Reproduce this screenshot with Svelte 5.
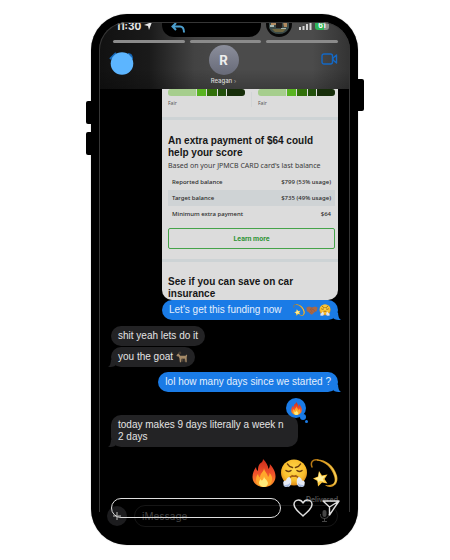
<script>
  let reply = $state("");
  let message = $state("");

  const rows = [
    { label: "Reported balance", value: "$799 (53% usage)" },
    { label: "Target balance", value: "$735 (49% usage)" },
    { label: "Minimum extra payment", value: "$64" },
  ];
</script>

{#snippet fire()}
  <svg class="emoji" viewBox="0 0 28 28" role="img" aria-label="fire">
    <defs>
      <linearGradient id="flame" x1="0" y1="0" x2="0" y2="1">
        <stop offset="0" stop-color="#c92b1b" />
        <stop offset="0.5" stop-color="#f0502a" />
        <stop offset="1" stop-color="#ff9a2a" />
      </linearGradient>
    </defs>
    <path fill="url(#flame)" d="M13 0c3 3 5 6 5.500 10 1-1 1.500-3 1.300-5 3 3 6 8 5.700 13-.3 6-5 10-11.500 10S2.500 24 2.500 18c0-4 1.500-7 3.500-10 .2 2 .7 3 2 4C8 7 9 5 11.500 3.500 12.500 2.500 13 1.500 13 0z" />
    <path fill="#ffa72b" d="M14 9c.5 4 3.500 5 4 9 1-1 1.500-2 1.500-4 2 2 3 4 2.500 7-.6 4-4 7-8 7s-8-3-8-7c0-3 1-5 2-6 .3 2 1 3 2 3.500C10 14 14 13 14 9z" />
    <path fill="#ffeb7a" d="M14 17c0 3 3 3 4 7 0 2-2 4-4 4s-5-2-5-4c0-2 1-3 1.500-4 .5 1 1 1.500 1.500 1.500 1-1 2-2 2-4.500z" />
  </svg>
{/snippet}

{#snippet huff()}
  <svg class="emoji" viewBox="0 0 28 28" role="img" aria-label="face with steam from nose">
    <defs>
      <radialGradient id="skin" cx="0.5" cy="0.4" r="0.6">
        <stop offset="0" stop-color="#ffd84b" />
        <stop offset="0.7" stop-color="#f9bd2c" />
        <stop offset="1" stop-color="#dd8818" />
      </radialGradient>
    </defs>
    <circle cx="14" cy="13.500" r="13" fill="url(#skin)" />
    <path fill="none" stroke="#6b3c0c" stroke-width="1.500" stroke-linecap="round" d="M7.500 5c1 2 2.500 3 5 3.500M20.500 5c-1 2-2.500 3-5 3.500M6 11.500c1.500 1.200 3.500 1.200 5 0M17 11.500c1.500 1.200 3.500 1.200 5 0" />
    <path fill="none" stroke="#a76012" stroke-width="1.300" stroke-linecap="round" d="M9 20c1-4 9-4 10 0M12 16.500c1 .8 3 .8 4 0" />
    <path fill="#e4e9f4" d="M9.500 18c2 2 2 5 1.500 7-.5 2-2 3-3.500 2.500C5.500 28.500 3 27.500 3.500 25c-1-2 .5-4 2.500-3.500C6.500 19.500 8 18 9.500 18zM18.500 18c-2 2-2 5-1.500 7 .5 2 2 3 3.500 2.500 2 1 4.500 0 4-2.500 1-2-.5-4-2.500-3.500C21.500 19.500 20 18 18.500 18z" />
    <path fill="#a9bce0" d="M4 26c2 0 4 0 6-2 0 3-1 4-2.500 3.500C6 28.500 4.500 28 4 26zM24 26c-2 0-4 0-6-2 0 3 1 4 2.500 3.500 1.500 1 3 .5 3.500-1.500z" />
  </svg>
{/snippet}

{#snippet dizzy()}
  <svg class="emoji" viewBox="0 0 28 28" role="img" aria-label="dizzy">
    <path fill="none" stroke="#b87913" stroke-width="1.500" stroke-linecap="round" d="M2 8C0 3 3 0 8 1" />
    <path fill="#d99b22" d="M7 .5c9 0 17 6 20 16 1.500 6-1 11-7 11.500-2 0-3.500-.8-5-2 9 1 11-3 9-9C21.500 9 16 3 7 1.500z" />
    <path fill="#f4ce58" d="M14 2.500c6 3 11 8 12.500 15 .8 5-1 8-4.500 9 3-2 4-5 3-9C23.500 11 20 6 14 2.500z" />
    <path fill="#ffc83d" d="M9 12l3 4.500 5.500-1-3 4.500 3 4.500-5.500-1-4 4-.5-5.500L3 19.500l5-2z" />
    <path fill="#fff0a0" d="M9 13l2.300 4.500 4-.7-2.500 3.500 1.500 2.500-4-1-2.500 2-.3-3L5 19.500l3.500-1.500z" />
  </svg>
{/snippet}

{#snippet handshake()}
  <svg class="emoji" viewBox="0 0 28 28" role="img" aria-label="handshake">
    <path fill="#a9694a" d="M1 8l6-2 7 2 7-2 6 2-2 9-4 1-6 6c-1 1-3 1-4 0l-6-6-3-1z" />
    <path fill="none" stroke="#8a5237" stroke-width="1.200" d="M14 8l-4 5 3 1 3-2 6 6M9 18l4 4M12 16l4 4" />
  </svg>
{/snippet}

{#snippet goat()}
  <svg class="emoji" viewBox="0 0 28 28" role="img" aria-label="goat">
    <path fill="#a58a68" d="M1 10l4-4 2 1 3 4h12l3-3 1 2-1 5v11h-3l-1-8h-8l-1 8H9l-1-9-2-4-4-1z" />
    <path fill="none" stroke="#6d5842" stroke-width="1.600" d="M6 6c0-3 2-4 5-3M8 7c1-2 2-2 4-2M15 18v7M19 18v7" />
  </svg>
{/snippet}

<main>
  <div class="phone">
    <i class="key mute"></i>
    <i class="key volume"></i>
    <i class="key power"></i>

    <div class="screen">
      <header>
        <div class="status">
          <div class="clock">
            <span>11:30</span>
            <svg width="8" height="8" viewBox="0 0 8 8"><path fill="#e8e8e8" d="M8 0L5 8 4 4 0 3z" /></svg>
          </div>
          <div class="island">
            <svg width="14" height="10" viewBox="0 0 14 10">
              <path fill="none" stroke="#4c9fce" stroke-width="2" d="M5 0L1.500 3.500 5 7M2 3.500h7q4 0 4 6" />
            </svg>
          </div>
          <div class="signals">
            <svg class="photo" width="26" height="26" viewBox="0 0 26 26">
              <circle cx="13" cy="13" r="13" fill="#080808" />
              <path fill="#3b4a48" d="M3 11h20v6q-3 6-10 6T3 17z" />
              <path fill="#b28a5f" d="M5 11h5v3H5zM17 11h4v5h-3z" />
              <path fill="#1d1816" d="M10 10h6v7h-6z" />
              <path fill="#6f6640" d="M6 18h14l-3 3H9z" />
              <path fill="#a7b7b1" d="M4 14h4v2H4zM15 17h5v1h-5z" />
            </svg>
            <svg width="13" height="7" viewBox="0 0 13 7">
              <path fill="#d4d4d4" d="M0 4h2v3H0zM3.500 3h2v4h-2zM7 1h2v6H7zM10.500 0h2v7h-2z" />
            </svg>
            <span class="battery">61</span>
          </div>
        </div>

        <div class="progress"><i></i><i></i><i></i></div>

        <div class="contact">
          <button class="back" aria-label="Back">
            <svg width="28" height="24" viewBox="0 0 28 24">
              <path fill="none" stroke="#1467b8" stroke-width="2" d="M1 8l6-6M19 3q4 0 4 5" />
              <circle cx="13" cy="12.500" r="11.300" fill="#5cb5ff" />
            </svg>
          </button>
          <div class="person">
            <span class="avatar">R</span>
            <span class="name">Reagan <b>›</b></span>
          </div>
          <button class="video" aria-label="Video call">
            <svg width="17" height="12" viewBox="0 0 17 12">
              <rect x="1" y="1" width="10.500" height="10" rx="2" fill="none" stroke="#1468c4" stroke-width="1.400" />
              <path fill="none" stroke="#1468c4" stroke-width="1.400" stroke-linejoin="round" d="M12 5l3.500-3v8L12 7z" />
            </svg>
          </button>
        </div>
      </header>

      <section class="chat">
        <article class="card">
          <div class="scores">
            {#each [1, 2] as score (score)}
              <div class="score">
                <div class="scale"><i></i><i></i><i></i><i></i><i></i></div>
                <span>Fair</span>
              </div>
            {/each}
          </div>
          <div class="offer">
            <h2>An extra payment of $64 could help your score</h2>
            <p>Based on your JPMCB CARD card's last balance</p>
            <table>
              <tbody>
                {#each rows as row (row.label)}
                  <tr>
                    <th scope="row">{row.label}</th>
                    <td>{row.value}</td>
                  </tr>
                {/each}
              </tbody>
            </table>
            <button class="learn">Learn more</button>
          </div>
          <div class="insurance">
            <h2>See if you can save on car insurance</h2>
          </div>
        </article>

        <p class="bubble mine wide tail">
          Let's get this funding now
          <span class="emojis">{@render dizzy()}{@render handshake()}{@render huff()}</span>
        </p>
        <p class="bubble theirs first">shit yeah lets do it</p>
        <p class="bubble theirs next tail">you the goat <span class="emojis">{@render goat()}</span></p>
        <p class="bubble mine answer tail">lol how many days since we started ?</p>
        <div class="bubble theirs last tail">
          today makes 9 days literally a week n 2 days
          <span class="reaction">{@render fire()}</span>
        </div>
        <div class="big">{@render fire()}{@render huff()}{@render dizzy()}</div>
        <p class="delivered">Delivered</p>
      </section>

      <footer>
        <button class="plus" aria-label="Add">
          <svg width="10" height="10" viewBox="0 0 10 10"><path stroke="#858585" stroke-width="1.500" d="M5 1v8M1 5h8" /></svg>
        </button>
        <div class="compose">
          <input type="text" aria-label="Message" placeholder="iMessage" bind:value={message} />
          <svg width="9" height="12" viewBox="0 0 9 12">
            <rect x="2.500" y="0" width="4" height="7" rx="2" fill="#454545" />
            <path fill="none" stroke="#454545" d="M.5 4v1.500q0 3 4 3t4-3V4M4.500 8v3M2 11.500h5" />
          </svg>
        </div>

        <div class="story">
          <input type="text" aria-label="Reply to story" bind:value={reply} />
          <button aria-label="Like">
            <svg width="20" height="18" viewBox="0 0 20 18">
              <path fill="none" stroke="#dedede" stroke-width="1.500" stroke-linejoin="round" d="M10 17C6 13 1 10 1 5.500 1 3 3 1 5.500 1 7.500 1 9 2 10 4c1-2 2.500-3 4.500-3C17 1 19 3 19 5.500 19 10 14 13 10 17z" />
            </svg>
          </button>
          <button aria-label="Share">
            <svg width="18" height="18" viewBox="0 0 18 18">
              <path fill="none" stroke="#dedede" stroke-width="1.400" stroke-linejoin="round" d="M1 2h16L7.500 16V8zM7.500 8L17 2" />
            </svg>
          </button>
        </div>
      </footer>
    </div>
  </div>
</main>

<style>
  :global(body) {
    background: #fff;
  }
  main {
    padding: 14px 92px 15px 91px;
    font-family: Inter, "Liberation Sans", sans-serif;
  }
  p,
  h2 {
    margin: 0;
  }
  button {
    padding: 0;
    border: 0;
    background: none;
    font-family: inherit;
    cursor: pointer;
  }
  svg {
    display: block;
    flex: none;
  }
  .phone {
    position: relative;
    padding: 8px 8px 18px;
    border-radius: 36px;
    background: #000;
    box-shadow: 0 0 1px #777;
  }
  .key {
    position: absolute;
    width: 8px;
    height: 23px;
    left: -5px;
    border-radius: 2px;
    background: #000;
  }
  .mute {
    top: 87px;
  }
  .volume {
    top: 118px;
  }
  .power {
    top: 65px;
    left: auto;
    right: -6px;
    height: 32px;
  }
  .screen {
    position: relative;
  }
  .screen::after {
    content: "";
    position: absolute;
    inset: 0 0 15px;
    border: 1px solid #363636;
    border-bottom: 0;
    border-radius: 28px 28px 0 0;
    pointer-events: none;
  }
  header {
    position: relative;
    height: 67px;
    padding: 0 12px 0 14px;
    box-sizing: border-box;
    overflow: hidden;
    border-radius: 28px 28px 0 0;
    background:
      linear-gradient(transparent 70%, rgba(0, 0, 0, 0.2)),
      linear-gradient(90deg, #111 0, #1a1a1a 20%, #434343 38%, #4b4b4b 55%, #4b4b4b 85%, #333);
  }
  .status {
    display: grid;
    grid-template-columns: 49px 99px 1fr;
    height: 18px;
  }
  .clock {
    display: flex;
    gap: 3px;
    padding-left: 3px;
    height: 8px;
    color: #e8e8e8;
    font-size: 10px;
    font-weight: 700;
    line-height: 8px;
  }
  .island {
    height: 15px;
    box-sizing: border-box;
    padding: 1px 9px;
    border-radius: 0 0 12px 12px;
    background: #000;
  }
  .signals {
    position: relative;
    display: flex;
    gap: 3px;
    padding-left: 38px;
  }
  .signals svg {
    margin-top: 1px;
  }
  .signals .photo {
    position: absolute;
    left: 5px;
    top: -12px;
  }
  .battery {
    width: 14px;
    height: 8px;
    border-radius: 0 0 3px 3px;
    background: linear-gradient(90deg, #2fb457 62%, #8a8f8b 62%);
    color: #fff;
    font-size: 7px;
    font-weight: 700;
    line-height: 8px;
    text-align: center;
  }
  .progress {
    display: flex;
    gap: 5px;
  }
  .progress i {
    flex: 1;
    height: 3px;
    border-radius: 2px;
    background: #8b8b8b;
  }
  .contact {
    display: grid;
    grid-template-columns: 1fr auto 1fr;
    padding-top: 2px;
  }
  .back {
    justify-self: start;
    align-self: start;
    margin: 6px 0 0 -4px;
  }
  .person {
    display: flex;
    flex-direction: column;
    align-items: center;
    margin-right: 4px;
  }
  .avatar {
    width: 30px;
    height: 30px;
    border-radius: 50%;
    background: linear-gradient(#8b8e9b, #676a78);
    color: #eee;
    font-size: 13px;
    font-weight: 700;
    line-height: 30px;
    text-align: center;
  }
  .name {
    color: #ddd;
    font-size: 6px;
    font-weight: 500;
    line-height: 11px;
  }
  .name b {
    color: #888;
  }
  .video {
    justify-self: end;
    align-self: start;
    margin-top: 8px;
  }
  .chat {
    display: flex;
    flex-direction: column;
    padding: 0 12px;
  }
  .card {
    align-self: flex-end;
    width: 176px;
    height: 211px;
    box-sizing: border-box;
    overflow: hidden;
    border-radius: 0 0 10px 10px;
    background: #dcdcdc;
    color: #161616;
    font-family: "Noto Sans", sans-serif;
  }
  .scores {
    display: grid;
    grid-template-columns: 1fr 1fr;
    gap: 13px;
    padding: 0 3px 6px 6px;
    border-bottom: 3px solid #cdd3d5;
  }
  .score + .score {
    position: relative;
  }
  .score + .score::before {
    content: "";
    position: absolute;
    left: -7px;
    top: 3px;
    height: 15px;
    border-left: 1px solid #d2d5d6;
  }
  .scale {
    display: grid;
    grid-template-columns: 28fr 10fr 10fr 8fr 18fr;
    gap: 1px;
    height: 7px;
    overflow: hidden;
    border-radius: 3px;
  }
  .scale i {
    background: #a6ce8d;
  }
  .scale i:nth-child(2) {
    background: #59b421;
  }
  .scale i:nth-child(3) {
    background: #32710a;
  }
  .scale i:nth-child(4) {
    background: #23500c;
  }
  .scale i:nth-child(5) {
    background: #172d0a;
  }
  .score span {
    display: block;
    color: #555;
    font-size: 5px;
    line-height: 15px;
  }
  .offer {
    padding: 15px 3px 10px 6px;
    border-bottom: 3px solid #cdd3d5;
  }
  h2 {
    padding-right: 16px;
    font-family: "Liberation Sans", sans-serif;
    font-size: 10px;
    font-weight: 700;
    line-height: 12px;
  }
  .offer p {
    color: #3a3a3a;
    font-size: 7px;
    line-height: 13px;
    white-space: nowrap;
  }
  table {
    width: 100%;
    margin: 2px 0 6px;
    border-collapse: collapse;
    color: #2a2a2a;
    font-size: 6px;
    line-height: 16px;
  }
  th,
  td {
    padding: 0 4px;
    font-weight: 500;
    text-align: left;
    white-space: nowrap;
  }
  td {
    text-align: right;
  }
  tr:nth-child(2) {
    background: #cfd3d5;
  }
  .learn {
    display: block;
    width: 100%;
    height: 21px;
    border: 1px solid #46a34a;
    border-radius: 2px;
    color: #2f9436;
    font-family: Roboto, sans-serif;
    font-size: 7px;
    font-weight: 700;
  }
  .insurance {
    padding: 14px 6px 0;
  }
  .bubble {
    position: relative;
    align-self: flex-start;
    padding: 4px 7px;
    border-radius: 10px;
    background: #232325;
    color: #e4e4e4;
    font-family: "Liberation Sans", sans-serif;
    font-size: 10px;
    line-height: 12px;
  }
  .mine {
    align-self: flex-end;
    background: #1a7be6;
    color: #e4effc;
  }
  .tail::after {
    content: "";
    position: absolute;
    right: -3px;
    bottom: 0;
    width: 10px;
    height: 8px;
    background: inherit;
    clip-path: path("M7 0C7 4 8 7 10 8C7 8 4 8 2 6Z");
  }
  .theirs.tail::after {
    right: auto;
    left: -3px;
    transform: scaleX(-1);
  }
  .wide {
    display: flex;
    justify-content: space-between;
    width: 176px;
    box-sizing: border-box;
    white-space: nowrap;
  }
  .first {
    margin-top: 6px;
  }
  .next {
    margin-top: 1px;
  }
  .answer {
    margin-top: 5px;
  }
  .last {
    width: 173px;
    margin-top: 23px;
  }
  .emojis {
    display: inline-flex;
    gap: 1px;
    vertical-align: top;
  }
  .emojis .emoji {
    width: 12px;
    height: 12px;
  }
  .reaction {
    position: absolute;
    top: -17px;
    right: -8px;
    display: grid;
    place-items: center;
    width: 20px;
    height: 20px;
    border-radius: 50%;
    background: #1a7be6;
  }
  .reaction .emoji {
    width: 13px;
    height: 13px;
  }
  .reaction::before,
  .reaction::after {
    content: "";
    position: absolute;
    right: 0;
    bottom: -2px;
    width: 6px;
    height: 6px;
    border-radius: 50%;
    background: #1a7be6;
  }
  .reaction::after {
    right: -2px;
    bottom: -5px;
    width: 3px;
    height: 3px;
  }
  .big {
    display: flex;
    justify-content: flex-end;
    gap: 2px;
    margin-top: 12px;
  }
  .big .emoji {
    width: 28px;
    height: 28px;
  }
  .delivered {
    margin-top: 8px;
    color: #555;
    font-size: 7px;
    font-weight: 600;
    line-height: 10px;
    text-align: right;
  }
  footer {
    position: relative;
    display: flex;
    align-items: center;
    gap: 7px;
    padding: 0 12px 0 8px;
  }
  .plus {
    display: grid;
    place-items: center;
    width: 20px;
    height: 20px;
    border-radius: 50%;
    background: #1c1c1e;
  }
  .compose {
    display: flex;
    flex: 1;
    align-items: center;
    height: 22px;
    box-sizing: border-box;
    padding: 0 8px 0 7px;
    border: 1px solid #161616;
    border-radius: 11px;
  }
  input {
    min-width: 0;
    flex: 1;
    padding: 0;
    border: 0;
    outline: 0;
    background: none;
    color: #ddd;
    font-family: inherit;
    font-size: 10px;
  }
  input::placeholder {
    color: #444;
    opacity: 1;
  }
  .story {
    position: absolute;
    inset: -7px 10px auto 12px;
    display: flex;
    align-items: center;
    height: 20px;
  }
  .story input {
    height: 20px;
    box-sizing: border-box;
    padding: 0 10px;
    border: 1px solid #dedede;
    border-radius: 10px;
  }
  .story button {
    margin-left: 9px;
  }
  .story input + button {
    margin-left: 12px;
  }
</style>
